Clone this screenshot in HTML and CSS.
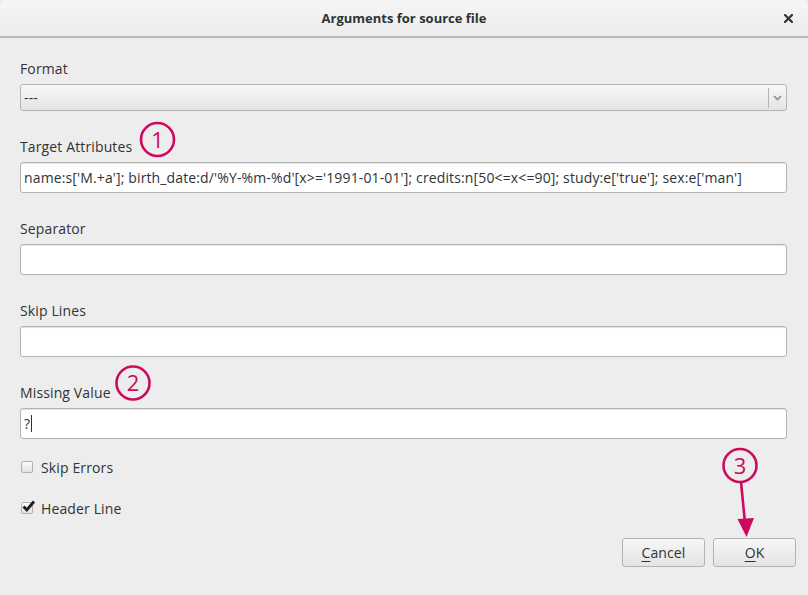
FILE: index.html
```html
<!DOCTYPE html>
<html>
<head>
<meta charset="utf-8">
<link rel="stylesheet" href="styles.css">
</head>
<body>
<div class="window">
  <header class="titlebar">
    <span class="title">Arguments for source file</span>
    <span class="close"><svg width="9" height="9" viewBox="0 0 9 9"><path d="M1 1L8 8M8 1L1 8" stroke="#2e3436" stroke-width="2.2" stroke-linecap="square"/></svg></span>
  </header>
  <main class="content">
    <div class="field">
      <label class="label">Format</label>
      <div class="combo"><span class="combo-text">---</span><span class="combo-sep"></span><span class="combo-arrow"><svg width="9" height="6" viewBox="0 0 9 6"><path d="M1 1L4.5 4.5L8 1" fill="none" stroke="#8a8a8a" stroke-width="1.6"/></svg></span></div>
    </div>
    <div class="field">
      <label class="label">Target Attributes</label>
      <div class="entry">name:s['M.+a']; birth_date:d/'%Y-%m-%d'[x&gt;='1991-01-01']; credits:n[50&lt;=x&lt;=90]; study:e['true']; sex:e['man']</div>
    </div>
    <div class="field">
      <label class="label">Separator</label>
      <div class="entry"></div>
    </div>
    <div class="field">
      <label class="label">Skip Lines</label>
      <div class="entry"></div>
    </div>
    <div class="field">
      <label class="label">Missing Value</label>
      <div class="entry">?<span class="caret"></span></div>
    </div>
    <div class="checks">
      <div class="check"><span class="box"></span><span>Skip Errors</span></div>
      <div class="check"><span class="box checked"><svg width="15" height="14" viewBox="0 0 15 14"><path d="M2.5 7.5L5.8 11L13 2.5" fill="none" stroke="#1c1c1c" stroke-width="2.8"/></svg></span><span>Header Line</span></div>
    </div>
    <div class="buttons">
      <button class="btn"><u>C</u>ancel</button>
      <button class="btn"><u>O</u>K</button>
    </div>
  </main>
  <svg class="annot" width="808" height="595" viewBox="0 0 808 595">
    <g fill="none" stroke="#cc0a5c" stroke-width="2.6">
      <circle cx="157.5" cy="139.5" r="16.5"/>
      <circle cx="133" cy="383" r="16.5"/>
      <circle cx="740" cy="465.5" r="16.5"/>
      <path d="M741 482L745.5 528"/>
    </g>
    <path d="M737.5 519L746.5 537L754 518Z" fill="#cc0a5c"/>
    <g fill="#cc0a5c" font-family="'Open Sans', sans-serif" font-size="22" text-anchor="middle">
      <text x="157.5" y="147.5">1</text>
      <text x="133" y="391">2</text>
      <text x="740" y="473.5">3</text>
    </g>
  </svg>
</div>
</body>
</html>
```
FILE: styles.css
```css
* { box-sizing: border-box; }
html, body { margin: 0; padding: 0; }
body {
  width: 808px;
  height: 595px;
  overflow: hidden;
  background: #ededed;
  font-family: "Open Sans", "DejaVu Sans", sans-serif;
  font-size: 14px;
  letter-spacing: 0.13px;
  color: #2e3436;
}
.window {
  position: relative;
  width: 808px;
  height: 595px;
  background: #ededed;
  border-radius: 7px 7px 0 0;
  overflow: hidden;
}
.titlebar {
  height: 38px;
  display: flex;
  align-items: center;
  justify-content: center;
  position: relative;
  background: linear-gradient(#f6f6f6, #ececec);
  border-bottom: 2px solid #b6b6b6;
  border-radius: 7px 7px 0 0;
}
.title {
  font-weight: bold;
  font-size: 13px;
  letter-spacing: 0;
  color: #2e3436;
}
.close {
  position: absolute;
  right: 15px;
  top: 14px;
  display: flex;
}
.content {
  padding: 22px 21px 0 20px;
  display: flex;
  flex-direction: column;
}
.field {
  display: flex;
  flex-direction: column;
  margin-bottom: 27px;
}
.label {
  line-height: 16px;
  height: 17px;
  padding-top: 1px;
  margin-bottom: 7px;
  color: #333;
}
.combo {
  height: 27px;
  border: 1px solid #b3b3b3;
  border-radius: 3px;
  background: linear-gradient(#f8f8f8, #e4e4e4);
  display: flex;
  align-items: center;
  padding-left: 3px;
}
.combo-text { flex: 1; line-height: 16px; }
.combo-sep {
  width: 1px;
  height: 20px;
  background: #b3b3b3;
}
.combo-arrow {
  width: 17px;
  display: flex;
  justify-content: center;
  align-items: center;
}
.entry {
  height: 31px;
  border: 1px solid #b3b3b3;
  border-radius: 3px;
  background: #fff;
  box-shadow: inset 0 2px 1px -1px #e3e3e3;
  padding: 0 3px;
  display: flex;
  align-items: center;
  white-space: nowrap;
  overflow: hidden;
  color: #2e3436;
}
.caret {
  display: inline-block;
  width: 1px;
  height: 17px;
  background: #2e3436;
  margin-left: 1px;
}
.checks {
  margin-top: -9px;
  display: flex;
  flex-direction: column;
  gap: 21px;
}
.check {
  display: flex;
  align-items: center;
  height: 20px;
  padding-left: 1px;
}
.box {
  position: relative;
  width: 12px;
  height: 12px;
  border: 1px solid #b0b0b0;
  border-radius: 2px;
  background: linear-gradient(#fafafa, #e2e2e2);
  margin-right: 8px;
}
.box svg {
  position: absolute;
  left: -1px;
  top: -4px;
}
.buttons {
  display: flex;
  justify-content: flex-end;
  gap: 8px;
  margin-top: 20px;
  margin-right: -9px;
}
.btn {
  width: 83px;
  height: 29px;
  border: 1px solid #b3b3b3;
  border-radius: 3px;
  background: linear-gradient(#f7f7f7, #e3e3e3);
  font-family: inherit;
  font-size: 14px;
  letter-spacing: 0.13px;
  color: #2e3436;
  padding: 0;
}
.btn u { text-decoration-thickness: 1px; text-underline-offset: 3px; }
.annot {
  position: absolute;
  left: 0;
  top: 0;
  pointer-events: none;
}
```
